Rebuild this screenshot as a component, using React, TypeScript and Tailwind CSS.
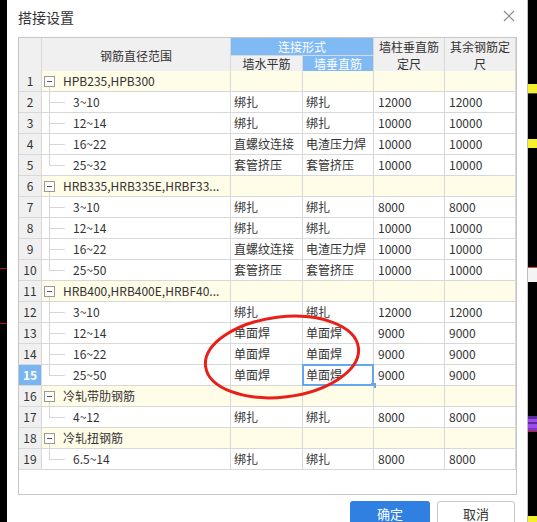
import React from 'react';

interface Row {
  n: number;
  group?: string;
  range?: string;
  wall?: string;
  vert?: string;
  fix1?: string;
  fix2?: string;
  last?: boolean;
}

const rows: Row[] = [
  { n: 1, group: 'HPB235,HPB300' },
  { n: 2, range: '3~10', wall: '绑扎', vert: '绑扎', fix1: '12000', fix2: '12000' },
  { n: 3, range: '12~14', wall: '绑扎', vert: '绑扎', fix1: '10000', fix2: '10000' },
  { n: 4, range: '16~22', wall: '直螺纹连接', vert: '电渣压力焊', fix1: '10000', fix2: '10000' },
  { n: 5, range: '25~32', wall: '套管挤压', vert: '套管挤压', fix1: '10000', fix2: '10000', last: true },
  { n: 6, group: 'HRB335,HRB335E,HRBF33...' },
  { n: 7, range: '3~10', wall: '绑扎', vert: '绑扎', fix1: '8000', fix2: '8000' },
  { n: 8, range: '12~14', wall: '绑扎', vert: '绑扎', fix1: '10000', fix2: '10000' },
  { n: 9, range: '16~22', wall: '直螺纹连接', vert: '电渣压力焊', fix1: '10000', fix2: '10000' },
  { n: 10, range: '25~50', wall: '套管挤压', vert: '套管挤压', fix1: '10000', fix2: '10000', last: true },
  { n: 11, group: 'HRB400,HRB400E,HRBF40...' },
  { n: 12, range: '3~10', wall: '绑扎', vert: '绑扎', fix1: '12000', fix2: '12000' },
  { n: 13, range: '12~14', wall: '单面焊', vert: '单面焊', fix1: '9000', fix2: '9000' },
  { n: 14, range: '16~22', wall: '单面焊', vert: '单面焊', fix1: '9000', fix2: '9000' },
  { n: 15, range: '25~50', wall: '单面焊', vert: '单面焊', fix1: '9000', fix2: '9000', last: true },
  { n: 16, group: '冷轧带肋钢筋' },
  { n: 17, range: '4~12', wall: '绑扎', vert: '绑扎', fix1: '8000', fix2: '8000', last: true },
  { n: 18, group: '冷轧扭钢筋' },
  { n: 19, range: '6.5~14', wall: '绑扎', vert: '绑扎', fix1: '8000', fix2: '8000', last: true },
];

const SELECTED = 15;
const cols = 'grid grid-cols-[23px_189px_72px_71px_71px_71px]';
const cell = 'border-r border-b border-[#d8d8d8] h-[21px] flex items-center';

const TableRow = ({ row }: { row: Row }) => {
  const isGroup = !!row.group;
  const sel = row.n === SELECTED;
  const bg = isGroup ? 'bg-[#fffce8]' : 'bg-white';
  return (
    <div className={cols}>
      <div
        className={`${cell} justify-center ${
          sel ? 'bg-[#79b5f2] text-white font-bold' : 'bg-[#f0f0f0]'
        }`}
      >
        {row.n}
      </div>
      <div className={`${cell} ${bg} relative`}>
        {isGroup ? (
          <>
            <span className="absolute left-[2px] top-[5px] w-[11px] h-[11px] border border-[#9a9a9a] bg-white flex items-center justify-center">
              <span className="w-[5px] h-px bg-[#555]" />
            </span>
            <span className="absolute left-[7px] top-[16px] bottom-0 w-px bg-[#d6d6d6]" />
            <span className="pl-[21px]">{row.group}</span>
          </>
        ) : (
          <>
            <span
              className={`absolute left-[7px] top-0 w-px bg-[#d6d6d6] ${
                row.last ? 'h-[10px]' : 'h-[21px]'
              }`}
            />
            <span className="absolute left-[7px] top-[10px] w-[16px] h-px bg-[#d6d6d6]" />
            <span className="pl-[31px]">{row.range}</span>
          </>
        )}
      </div>
      <div className={`${cell} ${bg} pl-[3px]`}>{row.wall}</div>
      <div className={`${cell} ${bg} pl-[3px] relative`}>
        {sel && (
          <>
            <span className="absolute inset-[-1px] border-2 border-[#66a6ec]" />
            <span className="absolute right-[-3px] bottom-[-3px] w-[5px] h-[5px] bg-[#66a6ec]" />
          </>
        )}
        <span className="relative">{row.vert}</span>
      </div>
      <div className={`${cell} ${bg} pl-[4px]`}>{row.fix1}</div>
      <div className={`${cell} ${bg} pl-[4px]`}>{row.fix2}</div>
    </div>
  );
};

const App = () => {
  return (
    <div
      className="relative w-[537px] h-[522px] overflow-hidden bg-black flex text-[#333] text-[12px]"
      style={{ fontFamily: '"Noto Sans CJK SC", "Noto Sans", sans-serif' }}
    >
      {/* left strip of the canvas behind */}
      <div className="w-[7px] flex flex-col">
        <div className="h-[268px]" />
        <div className="h-px bg-[#b01818]" />
        <div className="h-[54px]" />
        <div className="h-px bg-[#b01818]" />
      </div>

      {/* dialog */}
      <div className="w-[521px] bg-white border-r border-[#bdbdbd] flex flex-col overflow-hidden">
        <div className="h-[37px] shrink-0 flex items-center justify-between pl-[11px] pr-[12px]">
          <span className="text-[14px] text-[#333] mt-[-3px]">搭接设置</span>
          <svg width="12" height="12" viewBox="0 0 12 12" className="mt-[-6px]">
            <path d="M1 1L11 11M11 1L1 11" stroke="#8a8a8a" strokeWidth="1.2" />
          </svg>
        </div>

        <div className="ml-[11px] w-[499px] h-[458px] shrink-0 border border-[#c6c6c6] bg-white">
          {/* header */}
          <div className={`${cols} grid-rows-[18px_16px] h-[33px]`}>
            <div className="row-span-2 bg-[#f0f0f0] border-r border-b border-[#d8d8d8]" />
            <div className="row-span-2 bg-[#f0f0f0] border-r border-b border-[#d8d8d8] flex items-center justify-center pt-[2px]">
              钢筋直径范围
            </div>
            <div className="col-span-2 bg-[#7fbaf4] text-white border-r border-b border-[#d8d8d8] flex items-center justify-center">
              连接形式
            </div>
            <div className="row-span-2 bg-[#f0f0f0] border-r border-b border-[#d8d8d8] flex flex-col items-center justify-center leading-[17px]">
              <span>墙柱垂直筋</span>
              <span>定尺</span>
            </div>
            <div className="row-span-2 bg-[#f0f0f0] border-r border-b border-[#d8d8d8] flex flex-col items-center justify-center leading-[17px]">
              <span>其余钢筋定</span>
              <span>尺</span>
            </div>
            <div className="bg-[#f0f0f0] border-r border-b border-[#d8d8d8] flex items-center justify-center">
              墙水平筋
            </div>
            <div className="bg-[#7fbaf4] text-white border-r border-b border-[#d8d8d8] flex items-center justify-center">
              墙垂直筋
            </div>
          </div>

          {rows.map((r) => (
            <TableRow key={r.n} row={r} />
          ))}
        </div>

        <div className="flex shrink-0 justify-end gap-[7px] pr-[12px] pt-[6px]">
          <button className="w-[80px] h-[28px] shrink-0 rounded-[3px] bg-[#2f80e0] text-white text-[13px] pb-[2px]">
            确定
          </button>
          <button className="w-[78px] h-[28px] shrink-0 rounded-[3px] bg-white border border-[#c8c8c8] text-[#333] text-[13px] pb-[2px]">
            取消
          </button>
        </div>
      </div>

      {/* right strip of the canvas behind */}
      <div className="flex-1 flex flex-col">
        <div className="h-[84px]" />
        <div className="h-[10px] bg-[#f5f02a] border-b border-[#555]" />
        <div className="h-[45px]" />
        <div className="h-[9px] bg-[#f5f02a]" />
        <div className="h-[119px]" />
        <div className="h-[15px] bg-[#f4f4f4] border-t border-[#e04040]" />
        <div className="h-[134px]" />
        <div className="h-[16px] flex flex-col">
          <div className="h-[3px] bg-[#5a2aa0]" />
          <div className="h-[3px] bg-[#a048e8]" />
          <div className="h-[2px] bg-[#5a2aa0]" />
          <div className="h-[4px] bg-[#a048e8]" />
          <div className="h-[3px] bg-[#7a38c8]" />
          <div className="h-px bg-[#c02020]" />
        </div>
        <div className="h-[84px]" />
        <div className="flex-1 bg-[#f5f02a]" />
      </div>

      {/* red hand-drawn mark */}
      <svg className="absolute left-0 top-0 pointer-events-none" width="537" height="522">
        <ellipse
          cx="282"
          cy="357"
          rx="77"
          ry="40"
          fill="none"
          stroke="#e8201a"
          strokeWidth="3"
          transform="rotate(-7 282 357)"
        />
      </svg>
    </div>
  );
};

export default App;
